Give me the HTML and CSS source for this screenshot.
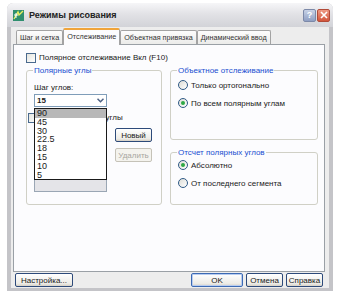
FILE: index.html
```html
<!DOCTYPE html>
<html lang="ru">
<head>
    <meta charset="UTF-8">
    <title>Режимы рисования</title>
    <link rel="stylesheet" href="styles.css">
</head>
<body>
    <div class="window">
        <div class="titlebar">
            <svg class="app-icon" width="11" height="11" viewBox="0 0 11 11">
                <rect x="0" y="0" width="11" height="11" fill="#2f8f6f"/>
                <path d="M1 9 L5 2 L6 5 L10 1" stroke="#e8f060" stroke-width="1.4" fill="none"/>
                <path d="M1 5 H5 M3 3 V8" stroke="#ffffff" stroke-width="1"/>
            </svg>
            <span class="title">Режимы рисования</span>
            <div class="title-buttons">
                <span class="tbtn help">?</span>
                <span class="tbtn close">
                    <svg width="8" height="8" viewBox="0 0 8 8">
                        <path d="M1 1 L7 7 M7 1 L1 7" stroke="#fff" stroke-width="1.6"/>
                    </svg>
                </span>
            </div>
        </div>

        <div class="client">
            <div class="tabs">
                <div class="tab">Шаг и сетка</div>
                <div class="tab active">Отслеживание</div>
                <div class="tab">Объектная привязка</div>
                <div class="tab">Динамический ввод</div>
            </div>

            <div class="panel">
                <div class="check-row">
                    <span class="checkbox"></span>
                    <span>Полярное отслеживание Вкл (F10)</span>
                </div>

                <div class="groups">
                    <fieldset class="group polar">
                        <legend>Полярные углы</legend>
                        <div class="field-label">Шаг углов:</div>
                        <div class="combo">
                            <div class="select">
                                <span>15</span>
                                <span class="arrow">
                                    <svg width="7" height="5" viewBox="0 0 7 5">
                                        <path d="M0.5 0.8 L3.5 3.8 L6.5 0.8" stroke="#4d6185" stroke-width="1.5" fill="none"/>
                                    </svg>
                                </span>
                            </div>
                            <ul class="droplist">
                                <li class="selected">90</li>
                                <li>45</li>
                                <li>30</li>
                                <li>22.5</li>
                                <li>18</li>
                                <li>15</li>
                                <li>10</li>
                                <li>5</li>
                            </ul>
                        </div>
                        <div class="extra-row">
                            <span class="checkbox"></span>
                            <span>Дополнительные углы</span>
                        </div>
                        <div class="extra-body">
                            <div class="listbox"></div>
                            <div class="side-buttons">
                                <button class="btn">Новый</button>
                                <button class="btn" disabled>Удалить</button>
                            </div>
                        </div>
                    </fieldset>

                    <div class="right-col">
                        <fieldset class="group snap">
                            <legend>Объектное отслеживание</legend>
                            <div class="radio-row"><span class="radio"></span>Только ортогонально</div>
                            <div class="radio-row"><span class="radio checked"></span>По всем полярным углам</div>
                        </fieldset>
                        <fieldset class="group measure">
                            <legend>Отсчет полярных углов</legend>
                            <div class="radio-row"><span class="radio checked"></span>Абсолютно</div>
                            <div class="radio-row"><span class="radio"></span>От последнего сегмента</div>
                        </fieldset>
                    </div>
                </div>
            </div>

            <div class="footer">
                <button class="btn wide">Настройка...</button>
                <div class="footer-right">
                    <button class="btn ok">OK</button>
                    <button class="btn">Отмена</button>
                    <button class="btn">Справка</button>
                </div>
            </div>
        </div>
    </div>
</body>
</html>
```

FILE: styles.css
```css
body {
    margin: 0;
    background: #ffffff;
    font-family: 'Liberation Sans', Arial, sans-serif;
    font-size: 8px;
    color: #1a1a1a;
}
.window {
    width: 326px;
    height: 288px;
    margin: 3px 0 0 7px;
    background: #c4c4c8;
    border-radius: 6px 6px 0 0;
    display: flex;
    flex-direction: column;
}
.titlebar {
    height: 24px;
    display: flex;
    align-items: center;
    padding: 0 3px 0 6px;
    border-radius: 6px 6px 0 0;
    background: linear-gradient(#f6f6f8, #e2e2e6 45%, #d2d3d8);
}
.app-icon {
    margin-right: 5px;
}
.title {
    font-weight: bold;
    font-size: 9px;
    color: #222;
    flex: 1;
}
.title-buttons {
    display: flex;
    gap: 1px;
}
.tbtn {
    width: 11px;
    height: 11px;
    border-radius: 2px;
    display: flex;
    align-items: center;
    justify-content: center;
    font-weight: bold;
    font-size: 9px;
}
.help {
    background: linear-gradient(#c8d2e6, #8f9fc3);
    color: #fff;
    border: 1px solid #7c89a8;
}
.close {
    background: linear-gradient(#ee9a84, #d2553b);
    border: 1px solid #b14a38;
}
.client {
    flex: 1;
    margin: 0 4px 3px 4px;
    background: #ededed;
    display: flex;
    flex-direction: column;
}
.tabs {
    display: flex;
    align-items: flex-end;
    height: 17px;
    padding-left: 5px;
}
.tab {
    height: 13px;
    padding: 0 3px;
    border: 1px solid #a3a3a3;
    border-bottom: none;
    border-radius: 2px 2px 0 0;
    background: linear-gradient(#fdfdfd, #ebebe9);
    line-height: 13px;
    font-size: 7.2px;
    color: #333;
}
.tab.active {
    height: 15px;
    background: #fcfcfe;
    border-top: 2px solid #f0a43a;
    line-height: 14px;
    margin-bottom: -1px;
    position: relative;
}
.panel {
    height: 219px;
    margin: 0 4px 0 2px;
    border: 1px solid #9aa0a6;
    background: #fcfcfe;
    padding: 7px 6px 0 12px;
}
.check-row {
    display: flex;
    align-items: center;
    gap: 3px;
    height: 11px;
}
.checkbox {
    width: 8px;
    height: 8px;
    border: 1px solid #4a6a8e;
    background: linear-gradient(135deg, #e4e4de, #ffffff);
}
.groups {
    display: flex;
    gap: 8px;
    margin-top: 3px;
}
.group {
    margin: 0;
    border: 1px solid #d0d0c6;
    border-radius: 3px;
    padding: 0 6px 6px 7px;
    box-sizing: border-box;
}
.group legend {
    color: #1a4ed0;
    padding: 0 1px;
    margin-left: -1px;
}
.polar {
    width: 136px;
    padding-left: 7px;
}
.field-label {
    margin-top: 8px;
}
.combo {
    position: relative;
    margin-top: 2px;
}
.select {
    width: 73px;
    height: 13px;
    border: 1px solid #7f9db9;
    background: #fff;
    display: flex;
    align-items: center;
    justify-content: space-between;
    padding-left: 2px;
    box-sizing: border-box;
    font-weight: bold;
    font-size: 8px;
}
.arrow {
    width: 11px;
    height: 11px;
    display: flex;
    align-items: center;
    justify-content: center;
}
.droplist {
    position: absolute;
    left: 0;
    top: 14px;
    width: 73px;
    margin: 0;
    padding: 0;
    list-style: none;
    border: 1px solid #1a1a1a;
    background: #fff;
    box-sizing: border-box;
    z-index: 2;
    font-family: 'Liberation Sans', Arial, sans-serif;
    font-size: 9px;
}
.droplist li {
    height: 8.8px;
    line-height: 9px;
    padding-left: 2px;
}
.droplist li.selected {
    background: #b8b8b8;
}
.extra-row {
    display: flex;
    align-items: center;
    gap: 2px;
    margin-top: 6px;
    height: 9px;
    margin-left: -6px;
}
.extra-body {
    display: flex;
    gap: 8px;
    margin-top: 6px;
}
.listbox {
    width: 73px;
    height: 64px;
    border: 1px solid #9aa6b4;
    background: #e4e4e8;
    box-sizing: border-box;
}
.side-buttons {
    display: flex;
    flex-direction: column;
    gap: 6px;
}
.btn {
    font-family: 'Liberation Sans', Arial, sans-serif;
    font-size: 8px;
    color: #1a1a1a;
    height: 14px;
    padding: 0 6px;
    border: 1px solid #2d4a7a;
    border-radius: 2px;
    background: linear-gradient(#ffffff, #ecebe6 80%, #d6d0c5);
}
.btn:disabled {
    color: #a8a6a0;
    border-color: #c5c2b8;
    background: #f4f3ee;
}
.side-buttons .btn {
    width: 37px;
    padding: 0;
}
.right-col {
    display: flex;
    flex-direction: column;
    gap: 8px;
}
.snap, .measure {
    width: 148px;
}
.snap {
    height: 74px;
}
.measure {
    height: 57px;
}
.radio-row {
    display: flex;
    align-items: center;
    gap: 3px;
    margin-top: 4px;
    height: 12px;
}
.measure .radio-row:first-of-type {
    margin-top: 2px;
}
.radio-row + .radio-row {
    margin-top: 6px;
}
.radio {
    width: 8px;
    height: 8px;
    border-radius: 50%;
    border: 1px solid #2f5a86;
    background: linear-gradient(135deg, #dcdcd6, #ffffff);
    display: flex;
    align-items: center;
    justify-content: center;
}
.radio.checked::after {
    content: "";
    width: 4px;
    height: 4px;
    border-radius: 50%;
    background: #2ea845;
}
.footer {
    flex: 1;
    display: flex;
    align-items: center;
    justify-content: space-between;
    padding: 0 6px 0 4px;
}
.footer-right {
    display: flex;
    gap: 3px;
}
.footer .btn {
    width: 37px;
    padding: 0;
}
.footer .btn.wide {
    width: 58px;
}
.footer .btn.ok {
    width: 52px;
    border-color: #3c6ab4;
    box-shadow: inset 0 0 0 1px #b9cdf0;
}
```
